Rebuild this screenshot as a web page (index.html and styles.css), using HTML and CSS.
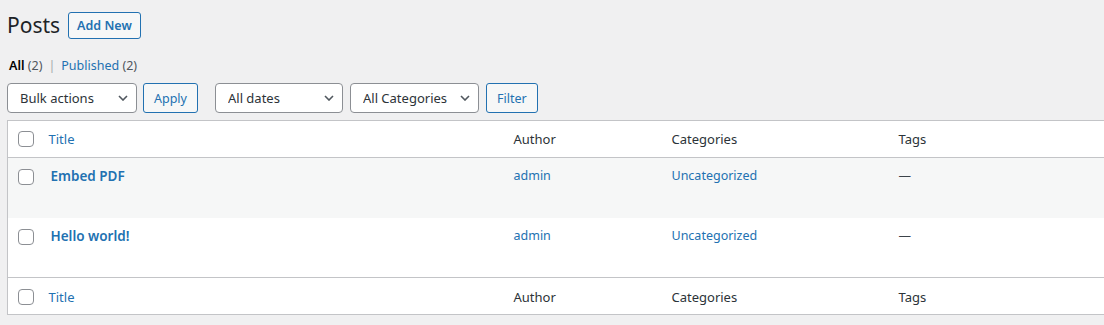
FILE: index.html
```html
<!DOCTYPE html>
<html lang="en">
<head>
  <meta charset="UTF-8" />
  <title>Posts</title>
  <link rel="stylesheet" href="styles.css">
</head>
<body>
  <div class="wrap">
    <!-- Page title -->
    <div class="page-header">
      <h1>Posts</h1>
      <a href="#" class="page-title-action">Add New</a>
    </div>

    <ul class="views">
      <li class="current"><a href="#">All <span class="count">(2)</span></a></li>
      <li class="sep">|</li>
      <li><a href="#">Published <span class="count">(2)</span></a></li>
    </ul>

    <!-- Filters -->
    <div class="tablenav">
      <div class="actions">
        <label class="select-wrap select-bulk">
          <select><option>Bulk actions</option></select>
          <svg class="chevron" viewBox="0 0 10 6"><polyline points="1,1 5,5 9,1" /></svg>
        </label>
        <button class="button">Apply</button>
      </div>
      <div class="actions actions-filter">
        <label class="select-wrap select-dates">
          <select><option>All dates</option></select>
          <svg class="chevron" viewBox="0 0 10 6"><polyline points="1,1 5,5 9,1" /></svg>
        </label>
        <label class="select-wrap select-cats">
          <select><option>All Categories</option></select>
          <svg class="chevron" viewBox="0 0 10 6"><polyline points="1,1 5,5 9,1" /></svg>
        </label>
        <button class="button">Filter</button>
      </div>
    </div>

    <!-- Posts table -->
    <table class="list-table">
      <colgroup>
        <col class="col-cb">
        <col class="col-title">
        <col class="col-author">
        <col class="col-cats">
        <col>
      </colgroup>
      <thead>
        <tr>
          <td class="check-column"><input type="checkbox"></td>
          <th><a href="#">Title</a></th>
          <th>Author</th>
          <th>Categories</th>
          <th>Tags</th>
        </tr>
      </thead>
      <tbody>
        <tr class="alt">
          <th class="check-column"><input type="checkbox"></th>
          <td>
            <strong class="title-line"><a href="#" class="row-title">Embed PDF</a></strong>
            <div class="row-actions">Edit | Quick Edit | Trash | View</div>
          </td>
          <td><a href="#">admin</a></td>
          <td><a href="#">Uncategorized</a></td>
          <td>—</td>
        </tr>
        <tr>
          <th class="check-column"><input type="checkbox"></th>
          <td>
            <strong class="title-line"><a href="#" class="row-title">Hello world!</a></strong>
            <div class="row-actions">Edit | Quick Edit | Trash | View</div>
          </td>
          <td><a href="#">admin</a></td>
          <td><a href="#">Uncategorized</a></td>
          <td>—</td>
        </tr>
      </tbody>
      <tfoot>
        <tr>
          <td class="check-column"><input type="checkbox"></td>
          <th><a href="#">Title</a></th>
          <th>Author</th>
          <th>Categories</th>
          <th>Tags</th>
        </tr>
      </tfoot>
    </table>
  </div>
</body>
</html>
```

FILE: styles.css
```css
:root {
  --bg: #f0f0f1;
  --link: #2271b1;
  --text: #3c434a;
  --text-dark: #2c3338;
  --border: #c3c4c7;
  --input-border: #8c8f94;
  --row-alt: #f6f7f7;
}

* {
  box-sizing: border-box;
}

html, body {
  overflow: hidden;
}

body {
  margin: 0;
  background: var(--bg);
  color: var(--text);
  font-family: "Noto Sans", "Open Sans", sans-serif;
  font-size: 12.5px;
  line-height: 1.4;
}

a {
  color: var(--link);
  text-decoration: none;
}

.wrap {
  width: 1110px;
  margin-left: 7px;
}

/* Header */
.page-header {
  display: flex;
  align-items: center;
  height: 30px;
  margin-top: 10px;
}

h1 {
  margin: 0 8px 0 0;
  font-size: 21px;
  font-weight: 400;
  line-height: 30px;
  color: #1d2327;
}

.page-title-action {
  display: inline-block;
  height: 27px;
  padding: 0 8px;
  border: 1px solid var(--link);
  border-radius: 3px;
  background: var(--row-alt);
  font-size: 12.5px;
  font-weight: 600;
  line-height: 25px;
}

/* Views */
.views {
  list-style: none;
  display: flex;
  gap: 6px;
  margin: 16px 0 0 2px;
  padding: 0;
  line-height: 20px;
}

.views .current a {
  color: #000;
  font-weight: 600;
}

.views .count {
  color: #50575e;
  font-weight: 400;
}

.views .sep {
  color: #a7aaad;
}

/* Tablenav */
.tablenav {
  display: flex;
  gap: 17px;
  height: 30px;
  margin: 7px 0 7px;
}

.actions {
  display: flex;
  gap: 6px;
}

.actions-filter {
  gap: 7px;
}

.select-wrap {
  position: relative;
  display: block;
}

select {
  appearance: none;
  -webkit-appearance: none;
  height: 30px;
  margin: 0;
  padding: 0 24px 0 12px;
  border: 1px solid var(--input-border);
  border-radius: 4px;
  background: #fff;
  color: var(--text-dark);
  font-family: inherit;
  font-size: 13px;
}

.select-bulk select { width: 130px; }
.select-dates select { width: 128px; }
.select-cats select { width: 129px; }

.chevron {
  position: absolute;
  right: 9px;
  top: 12px;
  width: 10px;
  height: 6px;
  fill: none;
  stroke: #50575e;
  stroke-width: 1.6;
  pointer-events: none;
}

.button {
  height: 30px;
  padding: 0 10px;
  border: 1px solid var(--link);
  border-radius: 3px;
  background: var(--row-alt);
  color: var(--link);
  font-family: inherit;
  font-size: 12.5px;
  cursor: pointer;
}

/* Table */
.list-table {
  width: 100%;
  table-layout: fixed;
  border-collapse: collapse;
  border: 1px solid var(--border);
  background: #fff;
  box-shadow: 0 1px 1px rgba(0, 0, 0, 0.04);
}

.col-cb { width: 31px; }
.col-title { width: 465px; }
.col-author { width: 158px; }
.col-cats { width: 227px; }

.list-table th,
.list-table td {
  padding: 8px 10px;
  text-align: left;
  vertical-align: top;
  font-weight: 400;
}

.list-table thead th,
.list-table tfoot th {
  height: 36px;
  font-size: 13px;
  line-height: 20px;
  color: var(--text-dark);
}

.list-table thead tr {
  border-bottom: 1px solid var(--border);
}

.list-table tfoot tr {
  border-top: 1px solid var(--border);
}

.list-table tfoot th,
.list-table tfoot td {
  height: 36px;
}

.list-table tfoot th {
  padding: 9px 10px 7px;
}

.list-table tfoot .check-column {
  padding-top: 11px;
}

.list-table tbody td {
  height: 60px;
  line-height: 20px;
}

.list-table tbody tr.alt {
  background: var(--row-alt);
}

.list-table .check-column {
  padding: 10px 0 0 10px;
}

.list-table tbody .check-column {
  padding-top: 11px;
}

input[type="checkbox"] {
  appearance: none;
  -webkit-appearance: none;
  display: block;
  width: 16px;
  height: 16px;
  margin: 0;
  border: 1px solid var(--input-border);
  border-radius: 4px;
  background: #fff;
}

.title-line {
  display: block;
  height: 20px;
  line-height: 20px;
}

.row-title {
  margin-left: 2px;
  font-size: 13.5px;
  font-weight: 600;
}

.row-actions {
  visibility: hidden;
  height: 20px;
  overflow: hidden;
}
```
